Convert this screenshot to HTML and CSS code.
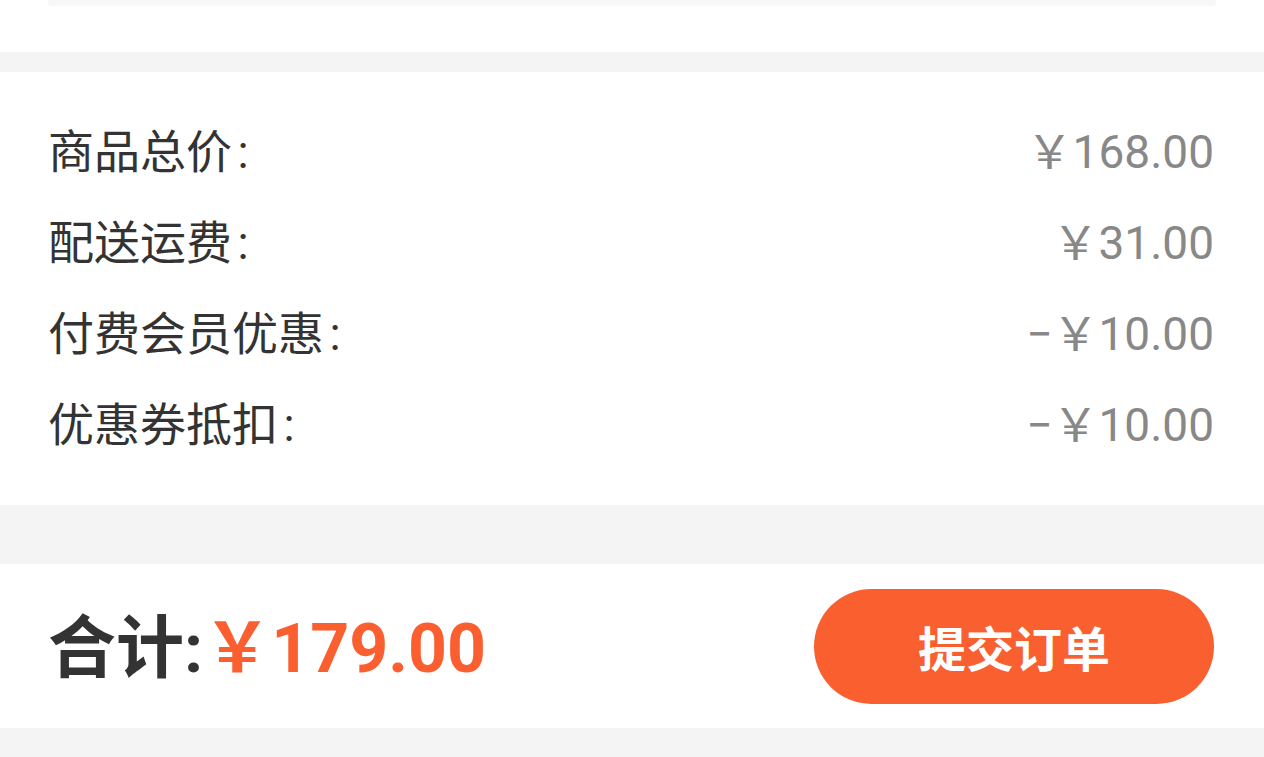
FILE: index.html
```html
<!DOCTYPE html>
<html>
<head>
    <meta charset="utf-8">
    <title>确认订单</title>
    <link rel="stylesheet" href="styles.css">
</head>
<body>
    <div class="page">
        <div class="goods-tail">
            <div class="goods-tail-bar"></div>
        </div>

        <div class="summary">
            <div class="row">
                <span class="label">商品总价 :</span>
                <span class="value">￥168.00</span>
            </div>
            <div class="row">
                <span class="label">配送运费 :</span>
                <span class="value">￥31.00</span>
            </div>
            <div class="row">
                <span class="label">付费会员优惠 :</span>
                <span class="value">−￥10.00</span>
            </div>
            <div class="row">
                <span class="label">优惠券抵扣 :</span>
                <span class="value">−￥10.00</span>
            </div>
        </div>

        <div class="footer">
            <div class="total">
                <span class="total-label">合计:</span><span class="total-price">￥179.00</span>
            </div>
            <button class="submit">提交订单</button>
        </div>
    </div>
</body>
</html>
```

FILE: styles.css
```css
body {
    margin: 0;
    background: #f4f4f4;
    font-family: Roboto, "Noto Sans CJK SC", sans-serif;
}
.page {
    width: 1264px;
    min-height: 757px;
}
.goods-tail {
    background: #fff;
    height: 52px;
    padding: 0 48px;
}
.goods-tail-bar {
    height: 6px;
    background: #f8f8f8;
    border-radius: 0 0 4px 4px;
}
.summary {
    background: #fff;
    margin-top: 20px;
    padding: 30px 50px 39px 48px;
}
.row {
    height: 91px;
    display: flex;
    align-items: center;
    justify-content: space-between;
    font-size: 46px;
}
.label {
    color: #333;
    word-spacing: -6px;
}
.value {
    color: #888;
}
.footer {
    background: #fff;
    margin-top: 59px;
    height: 164px;
    padding: 0 50px 0 48px;
    display: flex;
    align-items: center;
    justify-content: space-between;
}
.total {
    font-size: 68px;
    font-weight: bold;
    white-space: nowrap;
    margin-bottom: 8px;
}
.total-label {
    color: #333;
}
.total-price {
    color: #fb5f2f;
}
.submit {
    width: 400px;
    height: 115px;
    border: none;
    border-radius: 58px;
    background: #fa5f30;
    color: #fff;
    font-family: Roboto, "Noto Sans CJK SC", sans-serif;
    font-size: 48px;
    font-weight: bold;
    cursor: pointer;
}
```
